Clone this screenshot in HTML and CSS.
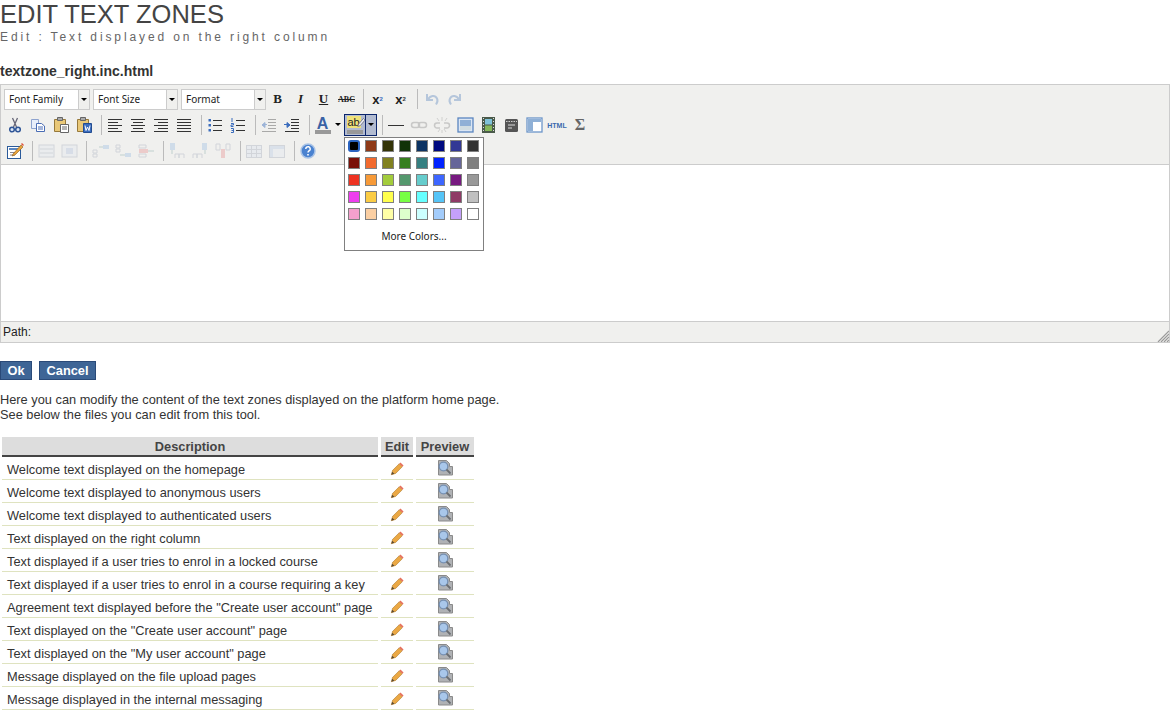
FILE: index.html
```html
<!DOCTYPE html>
<html lang="en">
<head>
  <meta charset="UTF-8">
  <title>Edit text zones</title>
  <link rel="stylesheet" href="styles.css">
</head>
<body>
  <svg class="defs" width="0" height="0">
    <symbol id="i-cut" viewBox="0 0 20 20"><path d="M7.500 3l4 9M12.500 3l-4 9" stroke="#667" stroke-width="1.300" fill="none"/><circle cx="7" cy="14.500" r="2.300" fill="#dbe6f4" stroke="#2f5597" stroke-width="1.500"/><circle cx="13" cy="14.500" r="2.300" fill="#dbe6f4" stroke="#2f5597" stroke-width="1.500"/></symbol>
    <symbol id="i-copy" viewBox="0 0 20 20"><path d="M3.500 4.500h7v9h-7z" fill="#e8eefa" stroke="#8ea3cf"/><path d="M8.500 8.500h5l3 2.500v5.500h-8z" fill="#fff" stroke="#4a6db5"/><path d="M10 12h5M10 14h5" stroke="#4a6db5"/></symbol>
    <symbol id="i-paste" viewBox="0 0 20 20"><path d="M3.500 4.500h11v12h-11z" fill="#e9c878" stroke="#97793a"/><path d="M6.500 2.500h5v3h-5z" fill="#aaa" stroke="#666"/><path d="M9.500 9.500h8v8h-8z" fill="#fff" stroke="#666"/><path d="M11 12h5M11 14h5" stroke="#666"/></symbol>
    <symbol id="i-word" viewBox="0 0 20 20"><path d="M3.500 4.500h11v12h-11z" fill="#e9c878" stroke="#97793a"/><path d="M6.500 2.500h5v3h-5z" fill="#aaa" stroke="#666"/><path d="M9.500 8.500h8v9h-8z" fill="#3a6cbd" stroke="#234c90"/><path d="M11 10.500l1 5 1.500-3.500 1.500 3.500 1-5" stroke="#fff" fill="none"/></symbol>
    <symbol id="i-left" viewBox="0 0 20 20"><path d="M3 4.500h14M3 7.500h10M3 10.500h14M3 13.500h10M3 16.500h14" stroke="#333"/></symbol>
    <symbol id="i-center" viewBox="0 0 20 20"><path d="M3 4.500h14M5 7.500h10M3 10.500h14M5 13.500h10M3 16.500h14" stroke="#333"/></symbol>
    <symbol id="i-right" viewBox="0 0 20 20"><path d="M3 4.500h14M7 7.500h10M3 10.500h14M7 13.500h10M3 16.500h14" stroke="#333"/></symbol>
    <symbol id="i-full" viewBox="0 0 20 20"><path d="M3 4.500h14M3 7.500h14M3 10.500h14M3 13.500h14M3 16.500h14" stroke="#333"/></symbol>
    <symbol id="i-bullets" viewBox="0 0 20 20"><path d="M8 5.500h9M8 10.500h9M8 15.500h9" stroke="#333"/><path d="M3.500 4h2.500v2.500h-2.500zM3.500 9h2.500v2.500h-2.500zM3.500 14h2.500v2.500h-2.500z" fill="#3a6cbd"/></symbol>
    <symbol id="i-numbers" viewBox="0 0 20 20"><path d="M8 5.500h9M8 10.500h9M8 15.500h9" stroke="#333"/><path d="M4 3v4M3 8.500h2.500v1.500h-2.500v1.500h2.500M3 13.500h2.500v4h-2.500M3.500 15.500h2" stroke="#3a6cbd" fill="none"/></symbol>
    <symbol id="i-outdent" viewBox="0 0 20 20"><path d="M9 4.500h8M9 7.500h8M9 10.500h8M9 13.500h8M3 16.500h14" stroke="#555"/><path d="M8 9.500h-4M6 7.500l-3 2.500 3 2.500z" fill="#3a6cbd" stroke="#3a6cbd"/></symbol>
    <symbol id="i-indent" viewBox="0 0 20 20"><path d="M9 4.500h8M9 7.500h8M9 10.500h8M9 13.500h8M3 16.500h14" stroke="#333"/><path d="M2 9.500h4M5 7.500l3 2.500-3 2.500z" fill="#3a6cbd" stroke="#3a6cbd"/></symbol>
    <symbol id="i-undo" viewBox="0 0 20 20"><path d="M5 5v6h6M6 10.500c2-4 7-5 9-1 1 2 .5 4-1 6" stroke="#6f94c6" stroke-width="2" fill="none"/></symbol>
    <symbol id="i-redo" viewBox="0 0 20 20"><path d="M15 5v6h-6M14 10.500c-2-4-7-5-9-1-1 2-.5 4 1 6" stroke="#6f94c6" stroke-width="2" fill="none"/></symbol>
    <symbol id="i-link" viewBox="0 0 20 20"><rect x="2.500" y="7.500" width="8" height="5" rx="2.500" fill="none" stroke="#999" stroke-width="1.500"/><rect x="9.500" y="7.500" width="8" height="5" rx="2.500" fill="none" stroke="#999" stroke-width="1.500"/></symbol>
    <symbol id="i-unlink" viewBox="0 0 20 20"><path d="M8 8h-3a2.500 2.500 0 000 5h3M12 8h3a2.500 2.500 0 010 5h-3" fill="none" stroke="#999" stroke-width="1.500"/><path d="M10 2v4M5 3l2 3M15 3l-2 3M10 15v3M6 17l2-3M14 17l-2-3" stroke="#aaa"/></symbol>
    <symbol id="i-image" viewBox="0 0 20 20"><rect x="3" y="3" width="15" height="14" fill="#dbe6f4" stroke="#5b86c0" stroke-width="1.300"/><rect x="5" y="5" width="11" height="10" fill="#8fb0d6"/><rect x="5" y="11" width="11" height="4" fill="#d0dde2"/></symbol>
    <symbol id="i-media" viewBox="0 0 20 20"><rect x="4" y="2" width="13" height="16" fill="#4a5a4a"/><rect x="7" y="4" width="7" height="5.500" fill="#7fc2d8"/><rect x="7" y="10.500" width="7" height="5.500" fill="#86b85a"/><path d="M5 3.500h1M5 6.500h1M5 9.500h1M5 12.500h1M5 15.500h1M15 3.500h1M15 6.500h1M15 9.500h1M15 12.500h1M15 15.500h1" stroke="#ddd"/></symbol>
    <symbol id="i-clip" viewBox="0 0 20 20"><rect x="4" y="4" width="13" height="13" rx="1.500" fill="#555"/><path d="M5 6.500h11" stroke="#ccc" stroke-dasharray="1.500 1"/><path d="M7 10h7M7 13h4" stroke="#ddd"/></symbol>
    <symbol id="i-template" viewBox="0 0 20 20"><rect x="3" y="3" width="15" height="14" fill="#fff" stroke="#6c95c9" stroke-width="1.300"/><path d="M4 4h13v3h-13zM4 7h5v9h-5z" fill="#8fb0d6"/></symbol>
    <symbol id="i-edit" viewBox="0 0 20 20"><rect x="2.500" y="5.500" width="13" height="12" fill="#fff" stroke="#2a5a9a"/><path d="M4 8h10" stroke="#5b86c0" stroke-width="2"/><path d="M5 11.500h6M5 14h5" stroke="#889"/><path d="M8 13l8-9 2 2-8 8-3 1z" fill="#e8a33c" stroke="#8a5a1c" stroke-width=".6"/><path d="M16 3l1-1 2 2-1 1z" fill="#e0523a"/></symbol>
    <symbol id="i-row1" viewBox="0 0 20 20"><rect x="3" y="4" width="15" height="12" fill="#e4e8ef" stroke="#aeb6c4"/><path d="M4 8h13M4 12h13" stroke="#aeb6c4"/></symbol>
    <symbol id="i-row2" viewBox="0 0 20 20"><rect x="3" y="4" width="15" height="12" fill="#e4e8ef" stroke="#aeb6c4"/><rect x="7" y="7" width="7" height="6" fill="#b9c8df"/></symbol>
    <symbol id="i-tb1" viewBox="0 0 20 20"><path d="M3 9h4v3h-4zM3 13h4v3h-4z" fill="none" stroke="#aeb6c4"/><path d="M9 6h4" stroke="#8aa"/><rect x="13" y="4" width="6" height="4" fill="#a9c4e4"/></symbol>
    <symbol id="i-tb2" viewBox="0 0 20 20"><path d="M3 4h4v3h-4zM3 8h4v3h-4z" fill="none" stroke="#aeb6c4"/><path d="M7 14h5" stroke="#8aa"/><rect x="12" y="12" width="6" height="4" fill="#a9c4e4"/></symbol>
    <symbol id="i-tb3" viewBox="0 0 20 20"><path d="M3 4h7v3h-7zM3 13h7v3h-7z" fill="none" stroke="#aeb6c4"/><rect x="3" y="8" width="9" height="4" fill="#e8a0a0"/><path d="M12 10h6" stroke="#8aa"/></symbol>
    <symbol id="i-tc1" viewBox="0 0 20 20"><rect x="3" y="2" width="5" height="7" fill="#a9c4e4"/><path d="M5 9v4" stroke="#8aa"/><path d="M8 17v-4h4v4M12 17v-4h5v4" fill="none" stroke="#aeb6c4"/></symbol>
    <symbol id="i-tc2" viewBox="0 0 20 20"><rect x="12" y="2" width="5" height="7" fill="#a9c4e4"/><path d="M15 9v4" stroke="#8aa"/><path d="M3 17v-4h4v4M7 17v-4h5v4" fill="none" stroke="#aeb6c4"/></symbol>
    <symbol id="i-tc3" viewBox="0 0 20 20"><path d="M3 3h4v6h-4zM13 3h4v6h-4z" fill="none" stroke="#aeb6c4"/><rect x="8" y="8" width="4" height="9" fill="#e8a0a0"/></symbol>
    <symbol id="i-grid" viewBox="0 0 20 20"><rect x="2.500" y="4.500" width="15" height="12" fill="#dde3ee" stroke="#aeb6c4"/><path d="M2.500 8.500h15M2.500 12.500h15M7.500 4.500v12M12.500 4.500v12" stroke="#aeb6c4"/></symbol>
    <symbol id="i-props" viewBox="0 0 20 20"><rect x="2.500" y="4.500" width="15" height="12" fill="#e4e8ef" stroke="#aeb6c4"/><path d="M3 5h14v3h-14zM3 8h3v8h-3z" fill="#c0cfe6"/></symbol>
    <symbol id="i-help" viewBox="0 0 20 20"><circle cx="10" cy="10" r="7" fill="#4a82d0" stroke="#a9c3e6" stroke-width="1.500"/><path d="M7.800 8a2.200 2.200 0 114 1.200c-.8.700-1.800 1-1.800 2.300" fill="none" stroke="#fff" stroke-width="1.500"/><path d="M9.200 13h1.600v1.600h-1.600z" fill="#fff"/></symbol>
    <symbol id="i-pencil" viewBox="0 0 16 16"><path d="M1.500 14.500l1.500-5 7.500-7.500 3.500 3.500-7.500 7.500z" fill="#eba844" stroke="#b07d30" stroke-width=".7"/><path d="M1.500 14.500l1-3.500 2.500 2.500z" fill="#5b4a33"/><path d="M10.500 2l1.500-1.500 3.500 3.500-1.500 1.500z" fill="#e6705c"/></symbol>
    <symbol id="i-preview" viewBox="0 0 16 16"><path d="M1.500 .5h8l3 3v3h3v8.500h-14z" fill="#b0b2b5" stroke="#8a8a8a"/><circle cx="6.500" cy="6.500" r="4.300" fill="#a9c7ea" stroke="#7690b2" stroke-width="1.300"/><path d="M9.500 9.500l4 4" stroke="#6b6e72" stroke-width="1.800"/></symbol>
  </svg>

  <h1 class="page-title">Edit text zones</h1>
  <p class="page-sub">Edit : Text displayed on the right column</p>
  <h2 class="file-name">textzone_right.inc.html</h2>

  <div class="editor">
    <div class="toolbar">
      <div class="tb-row">
        <div class="tb-select sel-first"><span class="sel-label">Font Family</span><span class="sel-arrow"></span></div>
        <div class="tb-select"><span class="sel-label">Font Size</span><span class="sel-arrow"></span></div>
        <div class="tb-select sel-last"><span class="sel-label">Format</span><span class="sel-arrow"></span></div>
        <span class="tb-btn txt-b">B</span>
        <span class="tb-btn txt-i">I</span>
        <span class="tb-btn txt-u">U</span>
        <span class="tb-btn txt-s">ABC</span>
        <span class="tb-sep"></span>
        <span class="tb-btn txt-x">x<sub>2</sub></span>
        <span class="tb-btn txt-x">x<sup>2</sup></span>
        <span class="tb-sep"></span>
        <span class="tb-btn off"><svg class="ico"><use href="#i-undo"/></svg></span>
        <span class="tb-btn off"><svg class="ico"><use href="#i-redo"/></svg></span>
      </div>
      <div class="tb-row">
        <span class="tb-btn"><svg class="ico"><use href="#i-cut"/></svg></span>
        <span class="tb-btn"><svg class="ico"><use href="#i-copy"/></svg></span>
        <span class="tb-btn"><svg class="ico"><use href="#i-paste"/></svg></span>
        <span class="tb-btn"><svg class="ico"><use href="#i-word"/></svg></span>
        <span class="tb-sep"></span>
        <span class="tb-btn"><svg class="ico"><use href="#i-left"/></svg></span>
        <span class="tb-btn"><svg class="ico"><use href="#i-center"/></svg></span>
        <span class="tb-btn"><svg class="ico"><use href="#i-right"/></svg></span>
        <span class="tb-btn"><svg class="ico"><use href="#i-full"/></svg></span>
        <span class="tb-sep"></span>
        <span class="tb-btn"><svg class="ico"><use href="#i-bullets"/></svg></span>
        <span class="tb-btn"><svg class="ico"><use href="#i-numbers"/></svg></span>
        <span class="tb-sep"></span>
        <span class="tb-btn off"><svg class="ico"><use href="#i-outdent"/></svg></span>
        <span class="tb-btn"><svg class="ico"><use href="#i-indent"/></svg></span>
        <span class="tb-sep"></span>
        <span class="tb-split">
          <span class="split-main txt-a">A<span class="color-bar"></span></span>
          <span class="split-arrow"></span>
        </span>
        <span class="tb-split is-open">
          <span class="split-main txt-ab"><span class="ab-mark">ab</span><svg class="ab-pen" viewBox="0 0 10 12"><path d="M1 11l1-3 6-7 2 2-6 7z" fill="#eef0f4" stroke="#667"/></svg><span class="color-bar"></span></span>
          <span class="split-arrow"></span>
        </span>
        <span class="tb-sep"></span>
        <span class="tb-btn"><span class="hr-line"></span></span>
        <span class="tb-btn off"><svg class="ico"><use href="#i-link"/></svg></span>
        <span class="tb-btn off"><svg class="ico"><use href="#i-unlink"/></svg></span>
        <span class="tb-btn"><svg class="ico"><use href="#i-image"/></svg></span>
        <span class="tb-btn"><svg class="ico"><use href="#i-media"/></svg></span>
        <span class="tb-btn"><svg class="ico"><use href="#i-clip"/></svg></span>
        <span class="tb-btn"><svg class="ico"><use href="#i-template"/></svg></span>
        <span class="tb-btn txt-html">HTML</span>
        <span class="tb-btn txt-sigma">&Sigma;</span>
      </div>
      <div class="tb-row">
        <span class="tb-btn"><svg class="ico"><use href="#i-edit"/></svg></span>
        <span class="tb-sep"></span>
        <span class="tb-btn off"><svg class="ico"><use href="#i-row1"/></svg></span>
        <span class="tb-btn off"><svg class="ico"><use href="#i-row2"/></svg></span>
        <span class="tb-sep"></span>
        <span class="tb-btn off"><svg class="ico"><use href="#i-tb1"/></svg></span>
        <span class="tb-btn off"><svg class="ico"><use href="#i-tb2"/></svg></span>
        <span class="tb-btn off"><svg class="ico"><use href="#i-tb3"/></svg></span>
        <span class="tb-sep"></span>
        <span class="tb-btn off"><svg class="ico"><use href="#i-tc1"/></svg></span>
        <span class="tb-btn off"><svg class="ico"><use href="#i-tc2"/></svg></span>
        <span class="tb-btn off"><svg class="ico"><use href="#i-tc3"/></svg></span>
        <span class="tb-sep"></span>
        <span class="tb-btn off"><svg class="ico"><use href="#i-grid"/></svg></span>
        <span class="tb-btn off"><svg class="ico"><use href="#i-props"/></svg></span>
        <span class="tb-sep"></span>
        <span class="tb-btn"><svg class="ico"><use href="#i-help"/></svg></span>
      </div>
    </div>

    <div class="edit-area"></div>

    <div class="status-bar">
      <span>Path:</span>
      <svg class="grip" viewBox="0 0 12 12"><path d="M12 1L1 12M12 4L4 12M12 7L7 12M12 10L10 12" stroke="#999" stroke-width="1.200"/></svg>
    </div>

    <div class="color-menu">
      <div class="swatches">
        <span class="sw c-000000 sw-on"></span><span class="sw c-993300"></span><span class="sw c-333300"></span><span class="sw c-003300"></span><span class="sw c-003366"></span><span class="sw c-000080"></span><span class="sw c-333399"></span><span class="sw c-333333"></span>
        <span class="sw c-800000"></span><span class="sw c-ff6600"></span><span class="sw c-808000"></span><span class="sw c-008000"></span><span class="sw c-008080"></span><span class="sw c-0000ff"></span><span class="sw c-666699"></span><span class="sw c-808080"></span>
        <span class="sw c-ff0000"></span><span class="sw c-ff9900"></span><span class="sw c-99cc00"></span><span class="sw c-339966"></span><span class="sw c-33cccc"></span><span class="sw c-3366ff"></span><span class="sw c-800080"></span><span class="sw c-999999"></span>
        <span class="sw c-ff00ff"></span><span class="sw c-ffcc00"></span><span class="sw c-ffff00"></span><span class="sw c-00ff00"></span><span class="sw c-00ffff"></span><span class="sw c-00ccff"></span><span class="sw c-993366"></span><span class="sw c-c0c0c0"></span>
        <span class="sw c-ff99cc"></span><span class="sw c-ffcc99"></span><span class="sw c-ffff99"></span><span class="sw c-ccffcc"></span><span class="sw c-ccffff"></span><span class="sw c-99ccff"></span><span class="sw c-cc99ff"></span><span class="sw c-ffffff"></span>
      </div>
      <div class="more-colors">More Colors...</div>
    </div>
  </div>

  <div class="actions">
    <button class="btn">Ok</button>
    <button class="btn">Cancel</button>
  </div>

  <p class="intro">Here you can modify the content of the text zones displayed on the platform home page.<br>See below the files you can edit from this tool.</p>

  <table class="zones">
    <thead>
      <tr><th class="col-desc">Description</th><th class="col-edit">Edit</th><th class="col-prev">Preview</th></tr>
    </thead>
    <tbody>
      <tr><td>Welcome text displayed on the homepage</td><td class="ic"><svg class="pencil"><use href="#i-pencil"/></svg></td><td class="ic"><svg class="prev"><use href="#i-preview"/></svg></td></tr>
      <tr><td>Welcome text displayed to anonymous users</td><td class="ic"><svg class="pencil"><use href="#i-pencil"/></svg></td><td class="ic"><svg class="prev"><use href="#i-preview"/></svg></td></tr>
      <tr><td>Welcome text displayed to authenticated users</td><td class="ic"><svg class="pencil"><use href="#i-pencil"/></svg></td><td class="ic"><svg class="prev"><use href="#i-preview"/></svg></td></tr>
      <tr><td>Text displayed on the right column</td><td class="ic"><svg class="pencil"><use href="#i-pencil"/></svg></td><td class="ic"><svg class="prev"><use href="#i-preview"/></svg></td></tr>
      <tr><td>Text displayed if a user tries to enrol in a locked course</td><td class="ic"><svg class="pencil"><use href="#i-pencil"/></svg></td><td class="ic"><svg class="prev"><use href="#i-preview"/></svg></td></tr>
      <tr><td>Text displayed if a user tries to enrol in a course requiring a key</td><td class="ic"><svg class="pencil"><use href="#i-pencil"/></svg></td><td class="ic"><svg class="prev"><use href="#i-preview"/></svg></td></tr>
      <tr><td>Agreement text displayed before the "Create user account" page</td><td class="ic"><svg class="pencil"><use href="#i-pencil"/></svg></td><td class="ic"><svg class="prev"><use href="#i-preview"/></svg></td></tr>
      <tr><td>Text displayed on the "Create user account" page</td><td class="ic"><svg class="pencil"><use href="#i-pencil"/></svg></td><td class="ic"><svg class="prev"><use href="#i-preview"/></svg></td></tr>
      <tr><td>Text displayed on the "My user account" page</td><td class="ic"><svg class="pencil"><use href="#i-pencil"/></svg></td><td class="ic"><svg class="prev"><use href="#i-preview"/></svg></td></tr>
      <tr><td>Message displayed on the file upload pages</td><td class="ic"><svg class="pencil"><use href="#i-pencil"/></svg></td><td class="ic"><svg class="prev"><use href="#i-preview"/></svg></td></tr>
      <tr><td>Message displayed in the internal messaging</td><td class="ic"><svg class="pencil"><use href="#i-pencil"/></svg></td><td class="ic"><svg class="prev"><use href="#i-preview"/></svg></td></tr>
    </tbody>
  </table>
</body>
</html>
```

FILE: styles.css
```css
body {
  font-family: "Liberation Sans", Arial, sans-serif;
  font-size: 12.8px;
  color: #333;
  margin: 0;
  background: #fff;
}
.defs {
  position: absolute;
}
.page-title {
  font-size: 25.5px;
  line-height: 28px;
  font-weight: normal;
  text-transform: uppercase;
  color: #444;
  margin: 0;
}
.page-sub {
  font-size: 12px;
  line-height: 16px;
  letter-spacing: 2.88px;
  color: #666;
  margin: 1px 0 0;
}
.file-name {
  font-size: 14px;
  line-height: 18px;
  font-weight: bold;
  color: #333;
  margin: 17px 0 4px;
}

/* editor */
.editor {
  position: relative;
  border: 1px solid #ccc;
  height: 257px;
  display: flex;
  flex-direction: column;
}
.toolbar {
  background: #f0f0ee;
  padding: 1px 0 0 2.5px;
  height: 78px;
  border-bottom: 1px solid #ccc;
}
.tb-row {
  display: flex;
  align-items: center;
  height: 26px;
}
.tb-select {
  display: flex;
  width: 85px;
  height: 21px;
  margin-right: 3px;
  border: 1px solid #ccc;
  background: #fff;
  font-family: "Noto Sans", sans-serif;
  font-size: 10px;
  color: #222;
  box-sizing: border-box;
}
.sel-first {
  width: 86px;
  margin-left: .5px;
}
.sel-last {
  margin-right: 0;
}
.sel-label {
  flex: 1;
  padding-left: 4px;
  line-height: 19px;
}
.sel-arrow {
  width: 10px;
  background: #f0f0ee;
  border-left: 1px solid #ccc;
  position: relative;
}
.sel-arrow::after,
.split-arrow::after {
  content: "";
  position: absolute;
  left: 2px;
  top: 8px;
  border: 3px solid transparent;
  border-top: 3px solid #000;
  border-bottom: 0;
}
.tb-btn {
  width: 23px;
  height: 22px;
  flex: none;
  display: flex;
  align-items: center;
  justify-content: center;
  color: #222;
}
.off {
  opacity: .45;
}
.ico {
  width: 20px;
  height: 20px;
}
.tb-sep {
  width: 1px;
  height: 20px;
  flex: none;
  background: #bbb;
  margin: 0 2px 0 5px;
}
.txt-b, .txt-i, .txt-u {
  font-family: "Liberation Serif", serif;
  font-size: 13px;
  font-weight: bold;
}
.txt-i {
  font-style: italic;
}
.txt-u {
  text-decoration: underline;
}
.txt-s {
  font-family: "Liberation Serif", serif;
  font-size: 8px;
  font-weight: bold;
  text-decoration: line-through;
}
.txt-x {
  font-family: "Liberation Sans", sans-serif;
  font-size: 13px;
  font-weight: bold;
}
.txt-x sub, .txt-x sup {
  font-size: 6px;
  color: #3a6cbd;
  line-height: 0;
}
.txt-x sup {
  color: #333;
}
.txt-html {
  font-size: 7px;
  font-weight: bold;
  color: #3a68ad;
}
.txt-sigma {
  font-family: "Liberation Serif", serif;
  font-size: 16px;
  font-weight: bold;
  color: #666;
}
.hr-line {
  display: block;
  width: 16px;
  height: 1px;
  background: #333;
}
.tb-split {
  display: flex;
  height: 22px;
  flex: none;
  box-sizing: border-box;
  border: 1px solid transparent;
}
.split-main {
  position: relative;
  width: 20px;
  flex: none;
  text-align: center;
}
.split-arrow {
  position: relative;
  width: 10px;
  flex: none;
}
.is-open {
  border-color: #0a246a;
  background: #b2bbd0;
}
.is-open .split-arrow {
  border-left: 1px solid #0a246a;
}
.txt-a {
  font-size: 16px;
  font-weight: bold;
  line-height: 17px;
  color: #3a62a5;
}
.txt-ab {
  font-size: 11px;
  line-height: 12px;
  color: #222;
  text-align: left;
}
.ab-mark {
  display: inline-block;
  margin: 1px 0 0 2px;
  padding: 0 1px;
  background: #efe27a;
}
.ab-pen {
  position: absolute;
  right: 0;
  top: 2px;
  width: 8px;
  height: 11px;
}
.color-bar {
  position: absolute;
  left: 2px;
  right: 2px;
  bottom: 1px;
  height: 4px;
  background: #999;
}
.edit-area {
  flex: 1;
  background: #fff;
}
.status-bar {
  height: 20px;
  border-top: 1px solid #ccc;
  background: #f0f0ee;
  display: flex;
  align-items: center;
  justify-content: space-between;
  padding-left: 2px;
  font-size: 12px;
  color: #222;
}
.grip {
  width: 12px;
  height: 12px;
  align-self: flex-end;
}

/* colour drop-down */
.color-menu {
  position: absolute;
  left: 343px;
  top: 52px;
  width: 138px;
  height: 112px;
  border: 1px solid #808080;
  background: #fff;
}
.swatches {
  display: grid;
  grid-template-columns: repeat(8, 12px);
  gap: 5px;
  padding: 2px 0 0 3px;
}
.sw {
  width: 12px;
  height: 12px;
  box-sizing: border-box;
  border: 1px solid #808080;
}
.sw-on {
  border: 2px solid #2a63c0;
  border-radius: 3px;
}
.more-colors {
  font-family: "Noto Sans", sans-serif;
  font-size: 10px;
  text-align: center;
  color: #222;
  margin-top: 9px;
}
.c-000000 { background: #000; }
.c-993300 { background: #8f3a17; }
.c-333300 { background: #343408; }
.c-003300 { background: #103308; }
.c-003366 { background: #0d3363; }
.c-000080 { background: #000a80; }
.c-333399 { background: #323895; }
.c-333333 { background: #333; }
.c-800000 { background: #7a1008; }
.c-ff6600 { background: #f26a2e; }
.c-808000 { background: #808020; }
.c-008000 { background: #367f1e; }
.c-008080 { background: #367f80; }
.c-0000ff { background: #0022ff; }
.c-666699 { background: #666699; }
.c-808080 { background: #808080; }
.c-ff0000 { background: #ee3322; }
.c-ff9900 { background: #f79a38; }
.c-99cc00 { background: #a3cc3c; }
.c-339966 { background: #55996e; }
.c-33cccc { background: #66cccc; }
.c-3366ff { background: #3d66ff; }
.c-800080 { background: #771a80; }
.c-999999 { background: #999; }
.c-ff00ff { background: #ee3dee; }
.c-ffcc00 { background: #fbcc44; }
.c-ffff00 { background: #ffff4d; }
.c-00ff00 { background: #77ff44; }
.c-00ffff { background: #66ffff; }
.c-00ccff { background: #55c4f7; }
.c-993366 { background: #8f3a66; }
.c-c0c0c0 { background: #c0c0c0; }
.c-ff99cc { background: #f5a0cc; }
.c-ffcc99 { background: #fbcfa3; }
.c-ffff99 { background: #ffffa6; }
.c-ccffcc { background: #ddffcc; }
.c-ccffff { background: #ccffff; }
.c-99ccff { background: #a3ccfb; }
.c-cc99ff { background: #c4a0fb; }
.c-ffffff { background: #fff; }

/* buttons */
.actions {
  display: flex;
  gap: 7px;
  margin-top: 18px;
}
.btn {
  height: 19px;
  padding: 0 6.5px;
  background: #3e6596;
  border: 1px solid #2a4a78;
  color: #fff;
  font-family: "Liberation Sans", Arial, sans-serif;
  font-size: 12.8px;
  font-weight: bold;
}
.intro {
  margin: 12px 0 0;
  line-height: 15px;
  color: #333;
}

/* list of zones */
.zones {
  border-collapse: separate;
  border-spacing: 3px 0;
  margin: 15px 0 0 -1px;
}
.zones th {
  height: 18px;
  padding: 0;
  background: #ddd;
  border-bottom: 2px solid #444;
  color: #444;
}
.col-desc { width: 376px; }
.col-edit { width: 32px; }
.col-prev { width: 58px; }
.zones td {
  height: 20px;
  padding: 2px 0 0 5px;
  border-bottom: 1px solid #dfe3c0;
  color: #333;
  white-space: nowrap;
}
.zones td.ic {
  padding: 0;
  text-align: center;
}
.pencil {
  width: 14px;
  height: 14px;
  vertical-align: middle;
}
.prev {
  width: 16px;
  height: 16px;
  vertical-align: middle;
}
```
